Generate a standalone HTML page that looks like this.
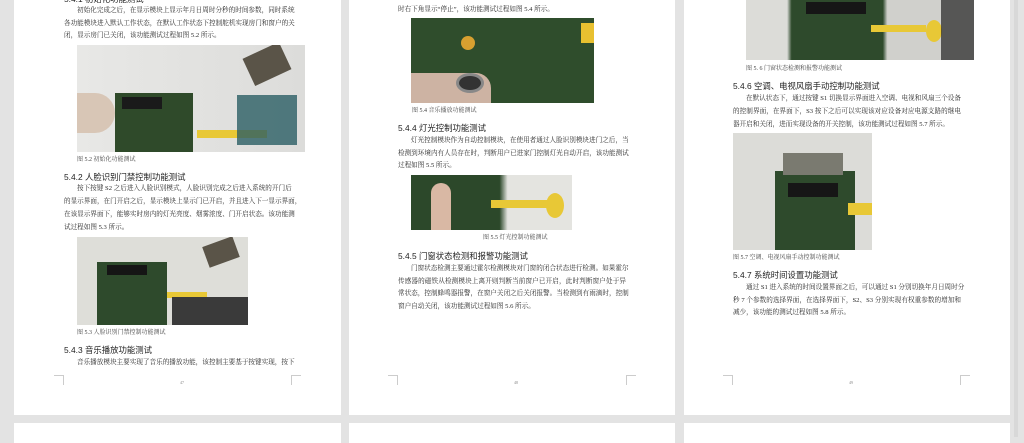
<!DOCTYPE html>
<html><head><meta charset="utf-8"><style>
*{margin:0;padding:0;box-sizing:border-box}
body{width:1024px;height:437px;background:#e3e3e3;position:relative;overflow:hidden;font-family:"Liberation Serif","Noto Serif CJK SC",serif;color:#2a2a2a}
.pg{position:absolute;background:#fff}
.t{position:absolute;font-size:6.6px;line-height:8px;white-space:nowrap}
.j{text-align:justify;text-align-last:justify}
.h{position:absolute;font-family:"Liberation Sans","Noto Sans CJK SC",sans-serif;font-size:8.4px;line-height:10px;color:#1e1e1e;white-space:nowrap}
.c{position:absolute;font-size:6px;line-height:8px;color:#444;white-space:nowrap}
.img{position:absolute;overflow:hidden}
.mk{position:absolute;width:10px;height:10px;border-color:#ccc;border-style:solid;border-width:0}
.n{position:absolute;font-size:4px;color:#888}
</style></head><body>
<div class="pg" style="left:14px;top:0;width:327px;height:415px"></div>
<div class="pg" style="left:349px;top:0;width:326px;height:415px"></div>
<div class="pg" style="left:684px;top:0;width:326px;height:415px"></div>
<div class="pg" style="left:14px;top:423px;width:327px;height:20px"></div>
<div class="pg" style="left:349px;top:423px;width:326px;height:20px"></div>
<div class="pg" style="left:684px;top:423px;width:326px;height:20px"></div>
<div style="position:absolute;left:1014px;top:0;width:4px;height:437px;background:#d8d8d8"></div>

<!-- page 1 -->
<div class="h" style="left:64px;top:-6px">5.4.1 初始化功能测试</div>
<div class="t j" style="left:77px;top:7px;width:214px">初始化完成之后，在显示模块上显示年月日周时分秒的时间参数，同时系统</div>
<div class="t j" style="left:64px;top:20px;width:227px">各功能模块进入默认工作状态，在默认工作状态下控制舵机实现房门和窗户的关</div>
<div class="t" style="left:64px;top:32px">闭，显示房门已关闭，该功能测试过程如图 5.2 所示。</div>
<div class="img" style="left:77px;top:45px;width:228px;height:107px;background:linear-gradient(90deg,#e8e8e6,#dcdcda)">
 <div style="position:absolute;left:38px;top:48px;width:78px;height:59px;background:#2f4a2a"></div>
 <div style="position:absolute;left:45px;top:52px;width:40px;height:12px;background:#1a1a1a"></div>
 <div style="position:absolute;left:0;top:48px;width:38px;height:40px;background:#d8c6b6;border-radius:0 20px 20px 0"></div>
 <div style="position:absolute;left:120px;top:85px;width:70px;height:8px;background:#e8c836"></div>
 <div style="position:absolute;left:170px;top:4px;width:40px;height:30px;background:#5a5448;transform:rotate(-25deg)"></div>
 <div style="position:absolute;left:160px;top:50px;width:60px;height:50px;background:#2b5e64;opacity:.8"></div>
</div>
<div class="c" style="left:77px;top:156px">图 5.2  初始化功能测试</div>
<div class="h" style="left:64px;top:172px">5.4.2  人脸识别门禁控制功能测试</div>
<div class="t j" style="left:77px;top:185px;width:214px">按下按键 S2 之后进入人脸识别模式，人脸识别完成之后进入系统的开门后</div>
<div class="t j" style="left:64px;top:198px;width:227px">的显示界面，在门开启之后，显示模块上显示门已开启，并且进入下一显示界面，</div>
<div class="t j" style="left:64px;top:211px;width:227px">在该显示界面下，能够实时房内的灯光亮度、烟雾浓度、门开启状态。该功能测</div>
<div class="t" style="left:64px;top:224px">试过程如图 5.3 所示。</div>
<div class="img" style="left:77px;top:237px;width:171px;height:88px;background:#deded9">
 <div style="position:absolute;left:20px;top:25px;width:70px;height:63px;background:#2e4a2c"></div>
 <div style="position:absolute;left:30px;top:28px;width:40px;height:10px;background:#151515"></div>
 <div style="position:absolute;left:90px;top:55px;width:40px;height:6px;background:#e8c836"></div>
 <div style="position:absolute;left:95px;top:60px;width:76px;height:28px;background:#3a3a3a"></div>
 <div style="position:absolute;left:128px;top:4px;width:32px;height:22px;background:#5a5448;transform:rotate(-20deg)"></div>
</div>
<div class="c" style="left:77px;top:329px">图 5.3  人脸识别门禁控制功能测试</div>
<div class="h" style="left:64px;top:345px">5.4.3  音乐播放功能测试</div>
<div class="t j" style="left:77px;top:359px;width:214px">音乐播放模块主要实现了音乐的播放功能，该控制主要基于按键实现，按下</div>
<div class="mk" style="left:54px;top:375px;border-right-width:1px;border-top-width:1px"></div>
<div class="mk" style="left:291px;top:375px;border-left-width:1px;border-top-width:1px"></div>
<div class="n" style="left:180px;top:380px">47</div>

<!-- page 2 -->
<div class="t" style="left:398px;top:6px">时右下角显示“停止”，该功能测试过程如图 5.4 所示。</div>
<div class="img" style="left:411px;top:18px;width:183px;height:85px;background:#2f4d2c">
 <div style="position:absolute;left:0;top:55px;width:80px;height:30px;background:#cdb3a3;border-radius:0 15px 0 0"></div>
 <div style="position:absolute;left:45px;top:55px;width:28px;height:20px;border-radius:50%;background:#333;border:3px solid #888"></div>
 <div style="position:absolute;left:170px;top:5px;width:13px;height:20px;background:#e8c030"></div>
 <div style="position:absolute;left:50px;top:18px;width:14px;height:14px;border-radius:50%;background:#d8a030"></div>
</div>
<div class="c" style="left:412px;top:107px">图 5.4  音乐播放功能测试</div>
<div class="h" style="left:398px;top:123px">5.4.4 灯光控制功能测试</div>
<div class="t j" style="left:411px;top:137px;width:215px">灯光控制模块作为自动控制模块，在使用者通过人脸识别模块进门之后，当</div>
<div class="t j" style="left:398px;top:150px;width:228px">检测到环境内有人员存在时，判断用户已进家门控制灯光自动开启，该功能测试</div>
<div class="t" style="left:398px;top:162px">过程如图 5.5 所示。</div>
<div class="img" style="left:411px;top:175px;width:161px;height:55px;background:linear-gradient(90deg,#2c482a 0,#2c482a 55%,#e4e4e0 60%)">
 <div style="position:absolute;left:20px;top:8px;width:20px;height:47px;background:#d9b8a4;border-radius:10px 10px 0 0"></div>
 <div style="position:absolute;left:80px;top:25px;width:60px;height:8px;background:#e8c836"></div>
 <div style="position:absolute;left:135px;top:18px;width:18px;height:25px;border-radius:50%;background:#e8c836"></div>
</div>
<div class="c" style="left:483px;top:234px">图 5.5  灯光控制功能测试</div>
<div class="h" style="left:398px;top:251px">5.4.5 门窗状态检测和报警功能测试</div>
<div class="t j" style="left:411px;top:265px;width:215px">门窗状态检测主要通过霍尔检测模块对门窗的闭合状态进行检测。如果霍尔</div>
<div class="t j" style="left:398px;top:278px;width:228px">传感器的磁铁从检测模块上离开则判断当前窗户已开启，此时判断窗户处于异</div>
<div class="t j" style="left:398px;top:290px;width:228px">常状态，控制蜂鸣器报警，在窗户关闭之后关闭报警。当检测到有雨滴时，控制</div>
<div class="t" style="left:398px;top:303px">窗户自动关闭，该功能测试过程如图 5.6 所示。</div>
<div class="mk" style="left:388px;top:375px;border-right-width:1px;border-top-width:1px"></div>
<div class="mk" style="left:626px;top:375px;border-left-width:1px;border-top-width:1px"></div>
<div class="n" style="left:514px;top:380px">48</div>

<!-- page 3 -->
<div class="img" style="left:746px;top:0;width:228px;height:60px;background:linear-gradient(90deg,#dcdcd8 0,#dcdcd8 18%,#2e4a2c 20%,#2e4a2c 60%,#d0d0cc 62%)">
 <div style="position:absolute;left:60px;top:2px;width:60px;height:12px;background:#161616"></div>
 <div style="position:absolute;left:125px;top:25px;width:55px;height:7px;background:#e8c836"></div>
 <div style="position:absolute;left:180px;top:20px;width:16px;height:22px;border-radius:50%;background:#e8c836"></div>
 <div style="position:absolute;left:195px;top:0;width:33px;height:60px;background:#222;opacity:.7"></div>
</div>
<div class="c" style="left:746px;top:65px">图 5. 6  门窗状态检测和报警功能测试</div>
<div class="h" style="left:733px;top:81px">5.4.6 空调、电视风扇手动控制功能测试</div>
<div class="t j" style="left:746px;top:95px;width:215px">在默认状态下，通过按键 S1 切换显示界面进入空调、电视和风扇三个设备</div>
<div class="t j" style="left:733px;top:108px;width:228px">的控制界面，在界面下，S3 按下之后可以实现该对应设备对应电源支路的继电</div>
<div class="t" style="left:733px;top:121px">器开启和关闭，进而实现设备的开关控制，该功能测试过程如图 5.7 所示。</div>
<div class="img" style="left:733px;top:133px;width:139px;height:117px;background:#dcdcd8">
 <div style="position:absolute;left:42px;top:38px;width:80px;height:79px;background:#2e4a2c"></div>
 <div style="position:absolute;left:55px;top:50px;width:50px;height:14px;background:#161616"></div>
 <div style="position:absolute;left:115px;top:70px;width:24px;height:12px;background:#e8c836"></div>
 <div style="position:absolute;left:50px;top:20px;width:60px;height:22px;background:#7a7a70"></div>
</div>
<div class="c" style="left:733px;top:254px">图 5.7  空调、电视风扇手动控制功能测试</div>
<div class="h" style="left:733px;top:270px">5.4.7 系统时间设置功能测试</div>
<div class="t j" style="left:746px;top:284px;width:215px">通过 S1 进入系统的时间设置界面之后，可以通过 S1 分别切换年月日周时分</div>
<div class="t j" style="left:733px;top:297px;width:228px">秒 7 个参数的选择界面，在选择界面下，S2、S3 分别实现有权重参数的增加和</div>
<div class="t" style="left:733px;top:309px">减少，该功能的测试过程如图 5.8 所示。</div>
<div class="mk" style="left:723px;top:375px;border-right-width:1px;border-top-width:1px"></div>
<div class="mk" style="left:960px;top:375px;border-left-width:1px;border-top-width:1px"></div>
<div class="n" style="left:849px;top:380px">49</div>
</body></html>
